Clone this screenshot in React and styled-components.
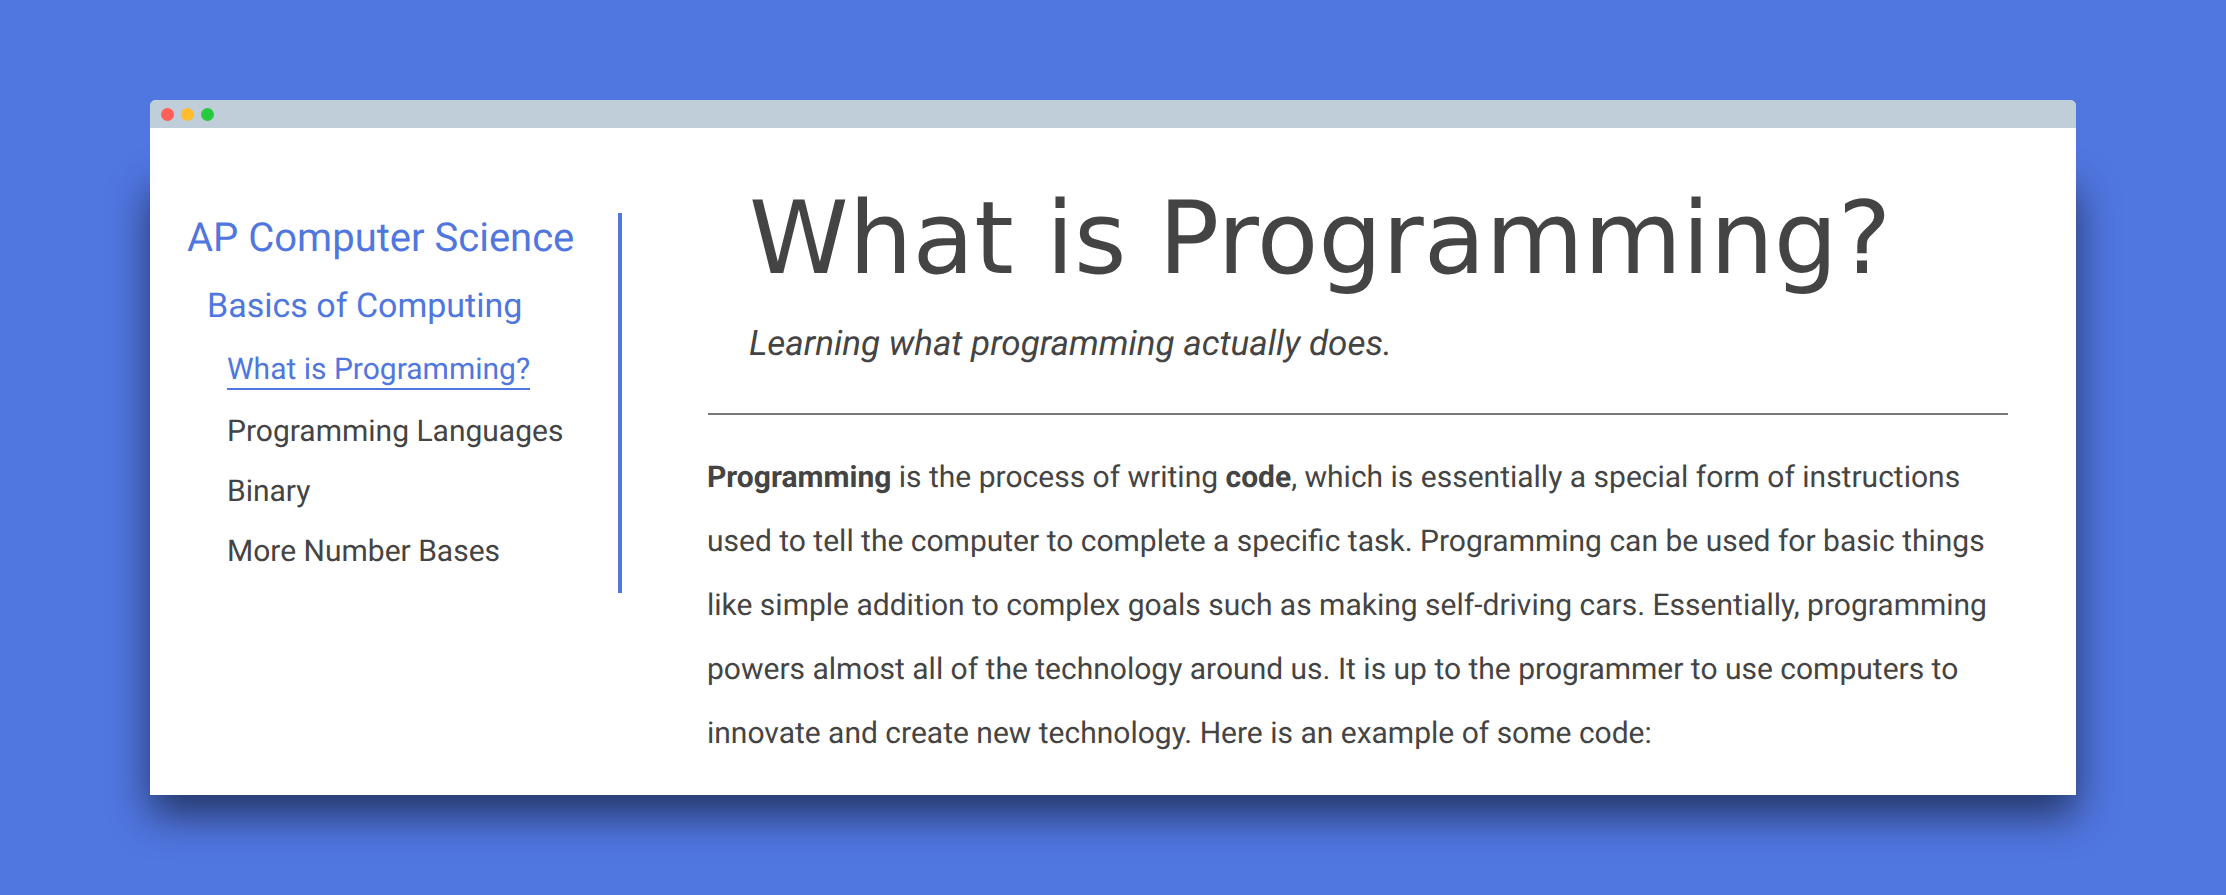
import React from "react";
import styled, { createGlobalStyle } from "styled-components";

const Global = createGlobalStyle`
  html, body { margin: 0; padding: 0; height: 100%; }
  body { background: #5076e0; font-family: Roboto, sans-serif; color: #444; overflow: hidden; text-rendering: geometricPrecision; }
`;
const Page = styled.div`
  position: relative; z-index: 0;
  width: 2226px; height: 895px; padding: 100px 150px 0; box-sizing: border-box; overflow: hidden;
`;
const Win = styled.div`
  position: relative;
  width: 1926px; height: 695px; background: #fff; border-radius: 6px 6px 0 0;
  display: flex; flex-direction: column;
  &::before {
    content: ""; position: absolute; z-index: -1;
    left: 0; right: 0; top: 90px; bottom: -20px;
    background: rgba(0, 0, 0, 0.55);
    filter: blur(20px);
  }
`;
const TitleBar = styled.div`
  height: 28px; flex: none; background: #c0ced9; border-radius: 6px 6px 0 0;
  display: flex; align-items: center; gap: 7px; padding-left: 10.5px;
`;
const Dot = styled.span`
  width: 13px; height: 13px; border-radius: 50%; background: ${p => p.$c};
`;
const Body = styled.div`
  display: flex; flex: 1; min-height: 0;
`;
const Side = styled.nav`
  width: 472px; height: 380px; margin-top: 85px; box-sizing: border-box; flex: none;
  border-right: 4px solid #5076e0;
`;
const Item = styled.div`
  font-size: ${p => p.$size}px; line-height: ${p => p.$lh}px; padding-left: ${p => p.$indent}px;
  margin-top: ${p => p.$mt || 0}px;
  color: ${p => p.$blue ? "#5076e0" : "#444"}; white-space: nowrap;
`;
const Current = styled.span`
  display: inline-block; border-bottom: 2px solid #5076e0; line-height: 36px;
`;
const Main = styled.main`
  width: 1301px; margin-left: 85px; flex: none;
`;
const Heading = styled.h1`
  margin: 0; padding: 50px 0 0 42px; font: 400 100.8px/120px "DejaVu Sans", sans-serif; color: #444; white-space: nowrap;
`;
const Sub = styled.p`
  margin: 0; padding: 22px 0 0 42px; font: italic 400 35px/48px Roboto, sans-serif; color: #444;
`;
const Rule = styled.hr`
  margin: 45px 0 0 1px; border: 0; height: 2px; background: #777;
`;
const Para = styled.p`
  margin: 31px 0 0; font-size: 30px; line-height: 64px; color: #444; white-space: nowrap;
`;
const Strong = styled.b`font-weight: 700;`;

export default function App() {
  return (
    <Page>
      <Global />
      <Win>
        <TitleBar>
          <Dot $c="#ff5f56" /><Dot $c="#ffbd2e" /><Dot $c="#27c93f" />
        </TitleBar>
        <Body>
          <Side>
            <Item $size={40} $lh={50} $indent={37} $blue>AP Computer Science</Item>
            <Item $size={34} $lh={62} $indent={57} $mt={12} $blue>Basics of Computing</Item>
            <Item $size={30} $lh={60} $indent={77} $mt={3} $blue><Current>What is Programming?</Current></Item>
            <Item $size={30} $lh={60} $indent={77} $mt={2}>Programming Languages</Item>
            <Item $size={30} $lh={60} $indent={77}>Binary</Item>
            <Item $size={30} $lh={60} $indent={77}>More Number Bases</Item>
          </Side>
          <Main>
            <Heading>What is Programming?</Heading>
            <Sub>Learning what programming actually does.</Sub>
            <Rule />
            <Para>
              <Strong>Programming</Strong> is the process of writing <Strong>code</Strong>, which is essentially a special form of instructions<br />
              used to tell the computer to complete a specific task. Programming can be used for basic things<br />
              like simple addition to complex goals such as making self-driving cars. Essentially, programming<br />
              powers almost all of the technology around us. It is up to the programmer to use computers to<br />
              innovate and create new technology. Here is an example of some code:
            </Para>
          </Main>
        </Body>
      </Win>
    </Page>
  );
}
